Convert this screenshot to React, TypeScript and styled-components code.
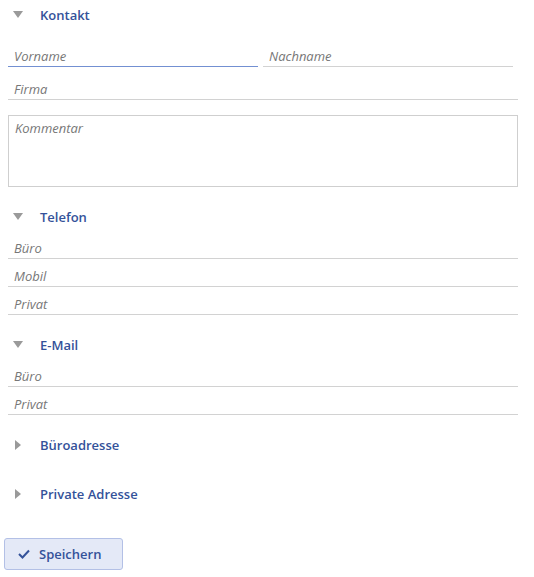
import React from "react";
import styled, { createGlobalStyle } from "styled-components";

const Global = createGlobalStyle`
  html, body { margin: 0; padding: 0; background: #fff; }
  body { font-family: "Open Sans", "Noto Sans", Arial, sans-serif; font-size: 13px; color: #333; }
  * { box-sizing: border-box; }
`;

const Page = styled.div`
  display: flex;
  flex-direction: column;
  width: 534px;
  padding: 0 16px 0 8px;
`;

const Section = styled.section<{ $after: number }>`
  display: flex;
  flex-direction: column;
  margin-bottom: ${(p) => p.$after}px;
`;

const Header = styled.div`
  height: 30px;
  display: flex;
  align-items: center;
  cursor: pointer;
`;

const Caret = styled.span`
  width: 32px;
  display: flex;
  align-items: center;
  padding-left: 5px;
`;

const Title = styled.span`
  font-weight: 600;
  font-size: 13px;
  color: #34529a;
`;

const Body = styled.div<{ $top: number; $gap: number }>`
  display: flex;
  flex-direction: column;
  padding-top: ${(p) => p.$top}px;
  gap: ${(p) => p.$gap}px;
`;

const Row = styled.div`
  display: flex;
  gap: 5px;
`;

const Field = styled.input<{ $w?: number; $focus?: boolean }>`
  height: 23px;
  width: ${(p) => (p.$w ? `${p.$w}px` : "100%")};
  border: none;
  border-bottom: 1px solid ${(p) => (p.$focus ? "#7390d2" : "#d2d2d2")};
  padding: 2px 6px 0;
  font-family: inherit;
  font-size: 13px;
  outline: none;
  background: transparent;
  &::placeholder { color: #777; font-style: italic; }
`;

const Area = styled.textarea`
  height: 72px;
  width: 100%;
  border: 1px solid #cfcfcf;
  padding: 3px 6px;
  font-family: inherit;
  font-size: 13px;
  resize: none;
  outline: none;
  &::placeholder { color: #777; font-style: italic; }
`;

const Spacer = styled.div`
  height: 5px;
`;

const Button = styled.button`
  margin-left: -4px;
  width: 119px;
  height: 32px;
  display: flex;
  align-items: center;
  gap: 9px;
  padding: 0 0 0 13px;
  background: #e4e9f7;
  border: 1px solid #b3c0e6;
  border-radius: 3px;
  font-family: inherit;
  font-size: 13px;
  font-weight: 600;
  color: #34529a;
  cursor: pointer;
`;

const Down = () => (
  <svg width="10" height="8" viewBox="0 0 10 8"><path d="M0 0 H10 L5 7 Z" fill="#9a9a9a" /></svg>
);
const Right = () => (
  <svg width="8" height="10" viewBox="0 0 8 10"><path d="M2 0 L8 5 L2 10 Z" fill="#9a9a9a" /></svg>
);

const SectionHeader = ({ title, open }: { title: string; open: boolean }) => (
  <Header>
    <Caret>{open ? <Down /> : <Right />}</Caret>
    <Title>{title}</Title>
  </Header>
);

export default function App() {
  return (
    <>
      <Global />
      <Page>
        <Section $after={15}>
          <SectionHeader title="Kontakt" open />
          <Body $top={14} $gap={10}>
            <Row>
              <Field $w={250} $focus placeholder="Vorname" />
              <Field $w={250} placeholder="Nachname" />
            </Row>
            <Field placeholder="Firma" />
            <Spacer />
          </Body>
          <Area placeholder="Kommentar" />
        </Section>
        <Section $after={15}>
          <SectionHeader title="Telefon" open />
          <Body $top={4} $gap={5}>
            <Field placeholder="Büro" />
            <Field placeholder="Mobil" />
            <Field placeholder="Privat" />
          </Body>
        </Section>
        <Section $after={15}>
          <SectionHeader title="E-Mail" open />
          <Body $top={4} $gap={5}>
            <Field placeholder="Büro" />
            <Field placeholder="Privat" />
          </Body>
        </Section>
        <Section $after={19}>
          <SectionHeader title="Büroadresse" open={false} />
        </Section>
        <Section $after={29}>
          <SectionHeader title="Private Adresse" open={false} />
        </Section>
        <div>
          <Button>
            <svg width="12" height="10" viewBox="0 0 12 10"><path d="M1 5 L4.5 8.5 L11 1.5" fill="none" stroke="#34529a" strokeWidth="2" /></svg>
            Speichern
          </Button>
        </div>
      </Page>
    </>
  );
}
